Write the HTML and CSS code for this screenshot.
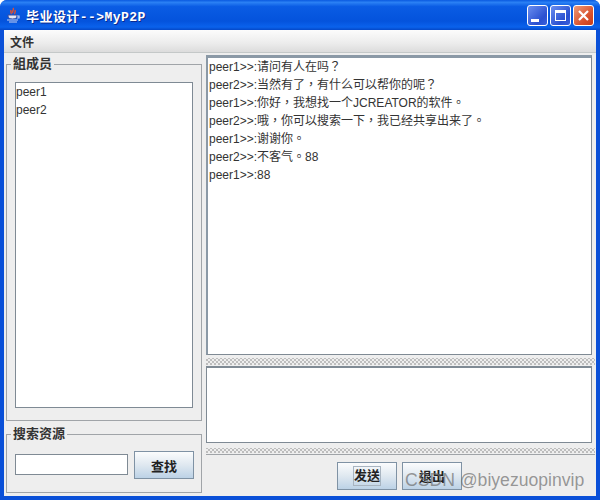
FILE: index.html
```html
<!doctype html>
<html>
  <head>
    <meta charset="UTF-8" />
    <title>毕业设计--&gt;MyP2P</title>
    <link rel="stylesheet" href="styles.css">
  </head>
  <body>
    <main class="window">
      <header class="titlebar">
        <svg class="java-icon" width="16" height="18" viewBox="0 0 16 18">
          <path d="M8 1c2 2-2 3 0 5M6 3c-1 2 1 3 0 4M10 3c1 2-1 3 0 4" fill="none" stroke="#e8502a" stroke-width="1.4" />
          <path d="M3 8h9v1c0 2-2 3-4.500 3S3 11 3 9z" fill="#e8e8f4" stroke="#3a4a9a" />
          <path d="M12 9h2v2h-2M2 13h11M4 15h8" fill="none" stroke="#c8d0f0" stroke-width="1.2" />
        </svg>
        <span class="title">毕业设计--&gt;MyP2P</span>
        <div class="controls">
          <button class="ctl" type="button"><span class="ctl-min"></span></button>
          <button class="ctl" type="button"><span class="ctl-max"></span></button>
          <button class="ctl ctl-close" type="button">
            <svg width="13" height="13" viewBox="0 0 13 13">
              <path d="M2 2l9 9M11 2l-9 9" stroke="#fff" stroke-width="2.2" />
            </svg>
          </button>
        </div>
      </header>

      <nav class="menubar"><span>文件</span></nav>

      <div class="content">
        <aside class="left">
          <fieldset class="members">
            <legend>組成员</legend>
            <ul class="member-list">
              <li>peer1</li>
              <li>peer2</li>
            </ul>
          </fieldset>
          <fieldset class="search">
            <legend>搜索资源</legend>
            <input class="search-input" type="text" />
            <button class="btn btn-find" type="button">查找</button>
          </fieldset>
        </aside>

        <section class="right">
          <div class="chat">
            <p>peer1&gt;&gt;:请问有人在吗？</p>
            <p>peer2&gt;&gt;:当然有了，有什么可以帮你的呢？</p>
            <p>peer1&gt;&gt;:你好，我想找一个JCREATOR的软件。</p>
            <p>peer2&gt;&gt;:哦，你可以搜索一下，我已经共享出来了。</p>
            <p>peer1&gt;&gt;:谢谢你。</p>
            <p>peer2&gt;&gt;:不客气。88</p>
            <p>peer1&gt;&gt;:88</p>
          </div>
          <div class="grip"></div>
          <div class="compose"></div>
          <div class="grip grip-low"></div>
          <div class="actions">
            <button class="btn" type="button"><span class="focus">发送</span></button>
            <button class="btn" type="button">退出</button>
          </div>
        </section>
      </div>

      <div class="watermark">CSDN @biyezuopinvip</div>
    </main>
  </body>
</html>
```

FILE: styles.css
```css
* {
  margin: 0;
  padding: 0;
  box-sizing: border-box;
}

body {
  width: 600px;
  height: 500px;
  overflow: hidden;
  background: #fff;
}

.window {
  position: relative;
  width: 600px;
  height: 500px;
  display: flex;
  flex-direction: column;
  padding: 0 4px 4px;
  background: #0a50d8;
  border-radius: 7px 7px 0 0;
  font-family: "Liberation Sans", "Noto Sans CJK TC", sans-serif;
  font-size: 12px;
  color: #333;
}

.titlebar {
  height: 30px;
  flex: none;
  display: flex;
  align-items: center;
  margin: 0 -4px;
  padding: 1px 6px 0 5px;
  border-radius: 7px 7px 0 0;
  background: linear-gradient(#0a5ae0 0, #2a80f4 8%, #0a5ce4 22%, #0453dc 70%, #0a62ec 90%, #0448c8 100%);
}

.java-icon {
  flex: none;
  margin-right: 5px;
}

.title {
  font-family: "Liberation Mono", "Noto Sans CJK SC", monospace;
  font-size: 13px;
  font-weight: bold;
  letter-spacing: 0.45px;
  color: #fff;
  text-shadow: 1px 1px 0 #0a2a90;
}

.controls {
  display: flex;
  gap: 2px;
  margin-left: auto;
}

.ctl {
  width: 21px;
  height: 21px;
  display: flex;
  align-items: center;
  justify-content: center;
  border: 1px solid #fff;
  border-radius: 3px;
  background: linear-gradient(135deg, #6a8ef0, #2a50d0 70%, #3a60dc);
}

.ctl-min {
  width: 8px;
  height: 3px;
  margin: 9px 5px 0 0;
  background: #fff;
}

.ctl-max {
  width: 11px;
  height: 11px;
  border: 1px solid #fff;
  border-top-width: 3px;
}

.ctl-close {
  background: linear-gradient(135deg, #ee9a78, #d8502c 65%, #c83c18);
}

.menubar {
  height: 23px;
  flex: none;
  display: flex;
  align-items: center;
  padding: 0 6px;
  background: linear-gradient(#fcfcfc, #ececec 60%, #dcdcdc);
  border-bottom: 1px solid #c4c8c8;
  font-weight: bold;
}

.content {
  flex: 1;
  display: flex;
  gap: 2px;
  min-height: 0;
  background: #eeeeee;
}

.left {
  width: 200px;
  flex: none;
  display: flex;
  flex-direction: column;
  gap: 5px;
  padding: 3px 2px 3px;
}

fieldset {
  border: 1px solid #a0a4a8;
  min-width: 0;
}

legend {
  margin-left: -4px;
  padding: 0 2px;
  font-size: 13px;
  font-weight: bold;
  line-height: 16px;
}

.members {
  flex: 1;
  min-height: 0;
  padding: 10px 8px 12px;
}

.member-list {
  height: 100%;
  list-style: none;
  padding: 0;
  background: #fff;
  border: 1px solid #7f8a94;
}

.member-list li {
  height: 18px;
  line-height: 18px;
}

.search {
  height: 67px;
  flex: none;
  display: flex;
  align-items: flex-start;
  gap: 6px;
  padding: 9px 8px 0;
}

.search-input {
  width: 113px;
  height: 21px;
  margin-top: 3px;
  border: 1px solid #7f8a94;
  background: #fff;
}

.btn {
  width: 60px;
  height: 28px;
  border: 1px solid #7f92a4;
  background: linear-gradient(#fbfcfd, #dfe8f0 50%, #bcd2e6);
  font-family: inherit;
  font-size: 13px;
  font-weight: bold;
  color: #222;
}

.btn-find {
  flex: none;
}

.right {
  flex: 1;
  min-width: 0;
  display: flex;
  flex-direction: column;
  padding-top: 2px;
}

.chat {
  height: 300px;
  flex: none;
  padding: 0 2px 0 1px;
  background: #fff;
  border: 1px solid #7f8a94;
  border-top: 3px solid #8b99a6;
  border-left: 2px solid #8b99a6;
  margin-right: 4px;
  line-height: 18px;
}

.grip {
  height: 11px;
  flex: none;
  padding: 3px 0 1px;
  background-color: #eeeeee;
  background-image:
    radial-gradient(circle at 1px 1px, #bcbcbc 0.7px, transparent 1px),
    radial-gradient(circle at 1px 1px, #bcbcbc 0.7px, transparent 1px);
  background-size: 4px 4px;
  background-position: 0 0, 2px 2px;
  background-clip: content-box;
  margin-right: 1px;
}

.compose {
  height: 77px;
  flex: none;
  background: #fff;
  border: 1px solid #7f8a94;
  border-top: 2px solid #7f8a94;
  margin-right: 4px;
}

.grip-low {
  height: 12px;
  padding: 5px 0 1px;
  border-bottom: 1px solid #a0a4a8;
}

.actions {
  flex: 1;
  display: flex;
  align-items: center;
  gap: 5px;
  padding-left: 131px;
}

.focus {
  display: inline-block;
  line-height: 18px;
  border: 1px solid #a8b4c0;
}

.watermark {
  position: absolute;
  left: 405px;
  top: 470px;
  font-family: "Liberation Sans", sans-serif;
  font-size: 17.6px;
  color: rgba(110, 110, 110, 0.7);
  pointer-events: none;
}
```
